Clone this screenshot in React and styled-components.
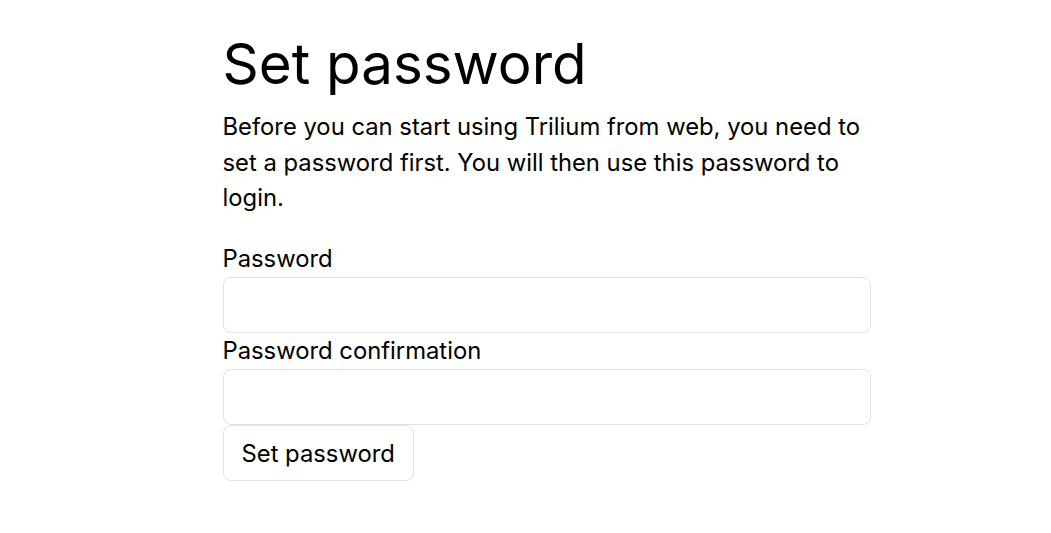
import React from "react";
import styled, { createGlobalStyle } from "styled-components";

const GlobalStyle = createGlobalStyle`
  html, body {
    margin: 0;
    padding: 0;
    background: #ffffff;
  }
  body {
    font-family: Inter, "Noto Sans", sans-serif;
    color: #000;
  }
`;

const Page = styled.div`
  box-sizing: border-box;
  width: 690px;
  margin: 0 auto;
  padding: 30px 0 0 42px;
  display: flex;
  flex-direction: column;
`;

const Title = styled.h1`
  margin: 0;
  font-size: 56.5px;
  font-weight: 400;
  line-height: 1.2;
`;

const Intro = styled.p`
  margin: 11px 0 25px;
  font-size: 23.8px;
  line-height: 35.8px;
`;

const Form = styled.form`
  display: flex;
  flex-direction: column;
  align-items: flex-start;
`;

const Label = styled.label`
  font-size: 23.8px;
  line-height: 36px;
`;

const Input = styled.input`
  box-sizing: border-box;
  width: 100%;
  height: 56px;
  margin: 0;
  padding: 0 16px;
  border: 1px solid #e2e2e6;
  border-radius: 8px;
  background: #fff;
  font: inherit;
  font-size: 23.8px;
  outline: none;
`;

const Button = styled.button`
  box-sizing: border-box;
  height: 56px;
  padding: 0 18px;
  border: 1px solid #e2e2e6;
  border-radius: 8px;
  background: #fff;
  color: #000;
  font-family: Inter, "Noto Sans", sans-serif;
  font-size: 23.8px;
  cursor: pointer;
`;

export default function App() {
  return (
    <>
      <GlobalStyle />
      <Page>
        <Title>Set password</Title>
        <Intro>
          Before you can start using Trilium from web, you need to set a password first. You will
          then use this password to login.
        </Intro>
        <Form onSubmit={(e) => e.preventDefault()}>
          <Label htmlFor="password">Password</Label>
          <Input id="password" type="password" />
          <Label htmlFor="password1">Password confirmation</Label>
          <Input id="password1" type="password" />
          <Button type="submit">Set password</Button>
        </Form>
      </Page>
    </>
  );
}
